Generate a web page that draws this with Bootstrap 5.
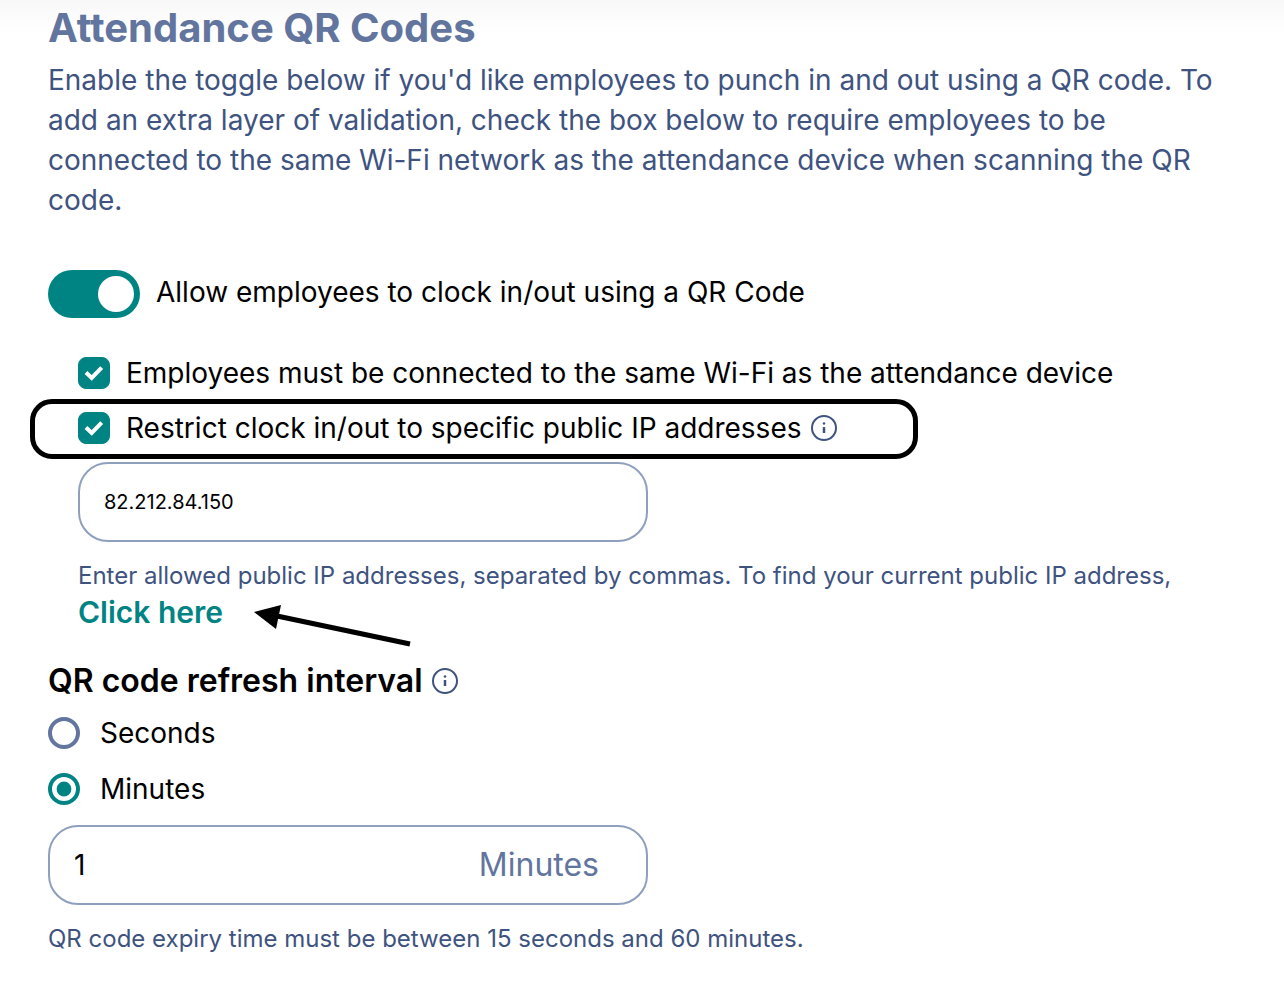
<!DOCTYPE html>
<html lang="en">
<head>
<meta charset="utf-8">
<meta name="viewport" content="width=device-width, initial-scale=1">
<title>Attendance QR Codes</title>
<link rel="stylesheet" href="https://cdn.jsdelivr.net/npm/bootstrap@5.3.0/dist/css/bootstrap.min.css">
<style>
:root { --teal: #008483; --slate: #62759e; --navy: #3e537f; --line: #8f9fbe; }
body { font-family: Inter, "Liberation Sans", sans-serif; font-size: 28px; line-height: 40px; font-feature-settings: "calt" 0, "liga" 0; color: #000; background: linear-gradient(#f8f8f8, #fff 34px) no-repeat #fff; }
.settings { padding: 0 48px 24px; }
.title { font-size: 40px; line-height: 40px; font-weight: 700; color: var(--slate); padding-top: 8px; margin-bottom: 12px; }
.intro { color: var(--navy); margin-bottom: 50px; }
.nested { padding-left: 30px; margin-top: 35px; }
.form-switch .form-check-input.switch { width: 92px; height: 48px; margin: 0; border: 0; background-color: var(--slate); }
.form-switch .form-check-input.switch:checked { background-color: var(--teal); background-image: url("data:image/svg+xml,%3csvg xmlns='http://www.w3.org/2000/svg' viewBox='0 0 48 48'%3e%3ccircle cx='24' cy='24' r='18' fill='%23fff'/%3e%3c/svg%3e"); }
.form-check-input.tick { width: 32px; height: 32px; margin: 0; border-radius: 8px; }
.form-check-input.tick:checked { background-color: var(--teal); border-color: var(--teal); background-image: url("data:image/svg+xml,%3csvg xmlns='http://www.w3.org/2000/svg' viewBox='1 1 30 30'%3e%3cpath d='M8 15.500l5.700 5.400 10-10.300' fill='none' stroke='%23fff' stroke-width='4'/%3e%3c/svg%3e"); }
.form-check-input.dot { width: 32px; height: 32px; margin: 0; border: 4px solid var(--slate); }
.form-check-input.dot:checked { background-color: #fff; border-color: var(--teal); background-image: url("data:image/svg+xml,%3csvg xmlns='http://www.w3.org/2000/svg' viewBox='0 0 24 24'%3e%3ccircle cx='12' cy='12' r='7.4' fill='%23008483'/%3e%3c/svg%3e"); }
.info { width: 28px; height: 28px; flex: none; color: var(--navy); }
.callout { border: 5px solid #000; border-radius: 22px; margin: 6px 0 3px -48px; padding: 0 43px 2px; min-height: 60px; width: 888px; }
.field { height: 80px; width: 570px; max-width: 100%; border: 2px solid var(--line); border-radius: 30px; padding: 0 24px; background: #fff; color: #000; }
.field-ip { font-size: 20px; }
.field-time { width: 600px; font-size: 28px; }
.field-time input { font-size: 28px; min-width: 0; }
.unit { font-size: 32px; color: var(--slate); padding-right: 23px; }
.hint { font-size: 24px; line-height: 36px; color: var(--navy); }
.here { font-size: 30px; line-height: 36px; font-weight: 600; color: var(--teal); }
.pointer { left: 100%; top: 0; margin-left: 30px; }
.subtitle { font-size: 32px; line-height: 40px; font-weight: 600; }
.heading-row { margin: 31px 0 12px; }
.choice { gap: 20px; margin-bottom: 16px; }
</style>
</head>
<body>
<svg class="d-none" aria-hidden="true">
  <symbol id="info" viewBox="0 0 28 28">
    <circle cx="14" cy="14" r="12" fill="none" stroke="currentColor" stroke-width="2"/>
    <path d="M14 13v6" stroke="currentColor" stroke-width="2.500"/>
    <circle cx="14" cy="9.500" r="1.300" fill="currentColor"/>
  </symbol>
</svg>
<main class="settings">
  <h1 class="title">Attendance QR Codes</h1>
  <p class="intro">Enable the toggle below if you'd like employees to punch in and out using a QR code. To add an extra layer of validation, check the box below to require employees to be connected to the same Wi-Fi network as the attendance device when scanning the QR code.</p>
  <div class="form-switch d-flex align-items-center gap-3 p-0">
    <input class="form-check-input switch flex-shrink-0" type="checkbox" role="switch" id="allow" checked>
    <label class="pb-1" for="allow">Allow employees to clock in/out using a QR Code</label>
  </div>
  <section class="nested">
    <div class="d-flex align-items-center gap-3">
      <input class="form-check-input tick flex-shrink-0" type="checkbox" id="wifi" checked>
      <label for="wifi">Employees must be connected to the same Wi-Fi as the attendance device</label>
    </div>
    <div class="callout d-flex align-items-center gap-3">
      <input class="form-check-input tick flex-shrink-0" type="checkbox" id="restrict" checked>
      <div class="d-flex align-items-center gap-2">
        <label for="restrict">Restrict clock in/out to specific public IP addresses</label>
        <svg class="info" role="img" aria-label="More information"><use href="#info"/></svg>
      </div>
    </div>
    <input class="field field-ip d-block" type="text" value="82.212.84.150" aria-label="Allowed public IP addresses">
    <p class="hint mt-3 mb-0">Enter allowed public IP addresses, separated by commas. To find your current public IP address,</p>
    <div class="d-flex">
      <div class="position-relative d-flex">
        <a href="#" class="here text-decoration-none">Click here</a>
        <svg class="pointer position-absolute" width="160" height="56" viewBox="0 0 160 56" aria-hidden="true">
          <path d="M24 22L157 50" stroke="#000" stroke-width="5"/>
          <path d="M1 18L28 11L23 35z"/>
        </svg>
      </div>
    </div>
  </section>
  <div class="heading-row d-flex align-items-center gap-2">
    <h2 class="subtitle m-0">QR code refresh interval</h2>
    <svg class="info" role="img" aria-label="More information"><use href="#info"/></svg>
  </div>
  <div class="choice d-flex align-items-center">
    <input class="form-check-input dot" type="radio" name="interval-unit" id="seconds">
    <label for="seconds">Seconds</label>
  </div>
  <div class="choice d-flex align-items-center">
    <input class="form-check-input dot" type="radio" name="interval-unit" id="minutes" checked>
    <label for="minutes">Minutes</label>
  </div>
  <div class="field field-time d-flex align-items-center">
    <input class="border-0 p-0 flex-grow-1" type="text" value="1" id="interval" aria-label="QR code refresh interval">
    <label class="unit" for="interval">Minutes</label>
  </div>
  <p class="hint mt-3 mb-0">QR code expiry time must be between 15 seconds and 60 minutes.</p>
</main>
<script src="https://cdn.jsdelivr.net/npm/bootstrap@5.3.0/dist/js/bootstrap.bundle.min.js"></script>
</body>
</html>
